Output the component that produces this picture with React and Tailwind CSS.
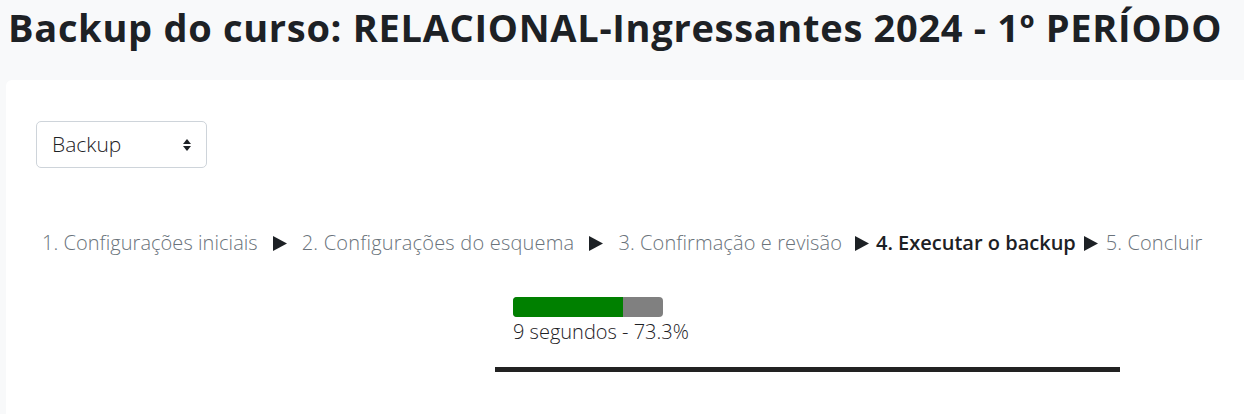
import React from "react";

const Arrow = ({ className }) => (
  <svg className={className} width="14" height="15" viewBox="0 0 14 15">
    <path d="M0 0 L14 7.5 L0 15 Z" fill="#1d2125" />
  </svg>
);

const App = () => {
  return (
    <div
      className="h-[414px] w-[1244px] overflow-hidden bg-[#f8f9fa] text-[#1d2125]"
      style={{ fontFamily: "'Open Sans', Lato, sans-serif" }}
    >
      {/* Título */}
      <h1 className="pl-[8px] pt-[5px] text-[38px] font-bold leading-[44px] tracking-[0.7px] whitespace-nowrap">
        Backup do curso: RELACIONAL-Ingressantes 2024 - 1º PERÍODO
      </h1>

      {/* Card principal */}
      <div className="mt-[31px] ml-[6px] w-[1300px] h-[400px] rounded-tl-[6px] bg-white pl-[30px] pt-[41px]">
        <div className="flex h-[47px] w-[171px] items-center justify-between rounded-[5px] border border-[#ced4da] pl-[15px] pr-[14px] text-[21px] text-[#1d2125]">
          <span className="font-light">Backup</span>
          <svg width="10" height="14" viewBox="0 0 10 14">
            <path d="M5 1 L9 6 H1 Z" fill="#1d2125" />
            <path d="M5 13 L9 8 H1 Z" fill="#1d2125" />
          </svg>
        </div>

        {/* Etapas */}
        <div className="mt-[63px] ml-[6px] flex items-center whitespace-nowrap text-[20px] leading-[24px]">
          <span className="font-light tracking-[0.05px] text-[#6a737b]">1. Configurações iniciais</span>
          <Arrow className="mx-[15px]" />
          <span className="font-light tracking-[0.2px] text-[#6a737b]">2. Configurações do esquema</span>
          <Arrow className="mx-[15px]" />
          <span className="font-light tracking-[0.1px] text-[#6a737b]">3. Confirmação e revisão</span>
          <Arrow className="ml-[13px] mr-[7px]" />
          <span className="font-semibold text-[#1d2125]">4. Executar o backup</span>
          <Arrow className="ml-[8px] mr-[8px]" />
          <span className="font-light tracking-[0.1px] text-[#6a737b]">5. Concluir</span>
        </div>

        {/* Progresso */}
        <div className="mt-[42px] ml-[477px]">
          <div className="flex h-[20px] w-[150px] overflow-hidden rounded-[4px] bg-[#808080]">
            <div className="h-full bg-[#008000]" style={{ width: "73.3%" }} />
          </div>
          <div className="mt-[3px] text-[20px] font-light leading-[24px] text-[#1d2125]">
            9 segundos - 73.3%
          </div>
        </div>

        <div className="mt-[23px] ml-[459px] h-[5px] w-[625px] bg-[#222222]" />
      </div>
    </div>
  );
};

export default App;
